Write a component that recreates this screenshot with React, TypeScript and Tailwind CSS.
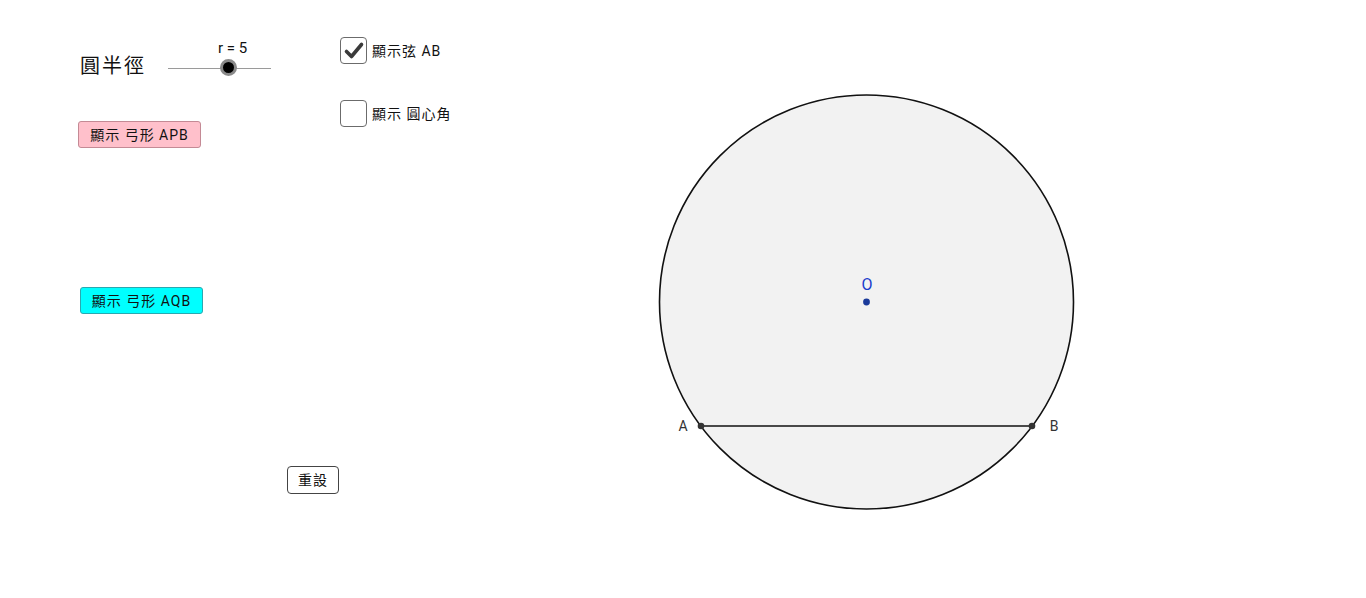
import React from "react"

const font = { fontFamily: 'Roboto, "Noto Sans CJK TC", sans-serif' }

function CheckBox({ checked, label }: { checked: boolean; label: string }) {
  return (
    <label className="flex items-center gap-[5px]">
      <span className="w-[27px] h-[27px] rounded-[4px] border-[1.5px] border-[#6b6b6b] bg-white flex items-center justify-center">
        {checked && (
          <svg width="22" height="22" viewBox="0 0 22 22">
            <path d="M3.5 11.5 L8.5 16.5 L18.5 4.5" fill="none" stroke="#3a3a3a" strokeWidth="3.6" strokeLinecap="round" strokeLinejoin="round" />
          </svg>
        )}
      </span>
      <span className="text-[14px] leading-[18px] tracking-[1px]">{label}</span>
    </label>
  )
}

function Slider() {
  return (
    <div className="flex flex-col items-center w-[103px] mt-[2px]">
      <span className="text-[15px] leading-[18px] pl-[26px]">r = 5</span>
      <div className="relative w-full h-[22px] flex items-center">
        <div className="w-full h-px bg-[#9a9a9a]" />
        {/* 滑桿把手 */}
        <div className="absolute left-[52px] top-[2px] w-[17px] h-[17px] rounded-full bg-black border-[3px] border-[#8a8a8a]" />
      </div>
    </div>
  )
}

function Geometry() {
  // 繪圖區：圓心 (866,302)，半徑 207
  return (
    <svg className="absolute left-0 top-0" width="1366" height="598" viewBox="0 0 1366 598">
      <circle cx="866.5" cy="302" r="207" fill="#f2f2f2" stroke="#111" strokeWidth="1.6" />
      <line x1="701" y1="426" x2="1032" y2="426" stroke="#111" strokeWidth="1.4" />
      <circle cx="701" cy="426" r="3.3" fill="#333" />
      <circle cx="1032" cy="426" r="3.3" fill="#333" />
      <circle cx="866.5" cy="302" r="3.4" fill="#1a3a9a" />
      <text x="683" y="431" fontSize="14" fill="#333" textAnchor="middle" fontFamily="Roboto, sans-serif">A</text>
      <text x="1054" y="431" fontSize="14" fill="#333" textAnchor="middle" fontFamily="Roboto, sans-serif">B</text>
      <text x="867" y="290" fontSize="16" fill="#1a3ccc" textAnchor="middle" fontFamily="Roboto, sans-serif">O</text>
    </svg>
  )
}

export default function App() {
  return (
    <div className="relative w-[1366px] h-[598px] overflow-hidden bg-white text-[#111]" style={font}>
      <Geometry />

      <div className="relative flex pl-[78px] pt-[37px]">
        {/* 左欄：半徑與按鈕 */}
        <div className="flex flex-col items-start w-[262px]">
          <div className="flex items-start h-[41px] pl-[2px] gap-[22px]">
            <span className="mt-[16px] text-[20px] leading-[26px] tracking-[2px]">圓半徑</span>
            <Slider />
          </div>
          <button className="mt-[43px] w-[123px] h-[27px] rounded-[3px] border border-[#c48a95] bg-[#ffc0cb] text-[14px] leading-none tracking-[1px]">
            顯示 弓形 APB
          </button>
          <button className="mt-[139px] ml-[2px] w-[123px] h-[27px] rounded-[3px] border border-[#2aa8b0] bg-[#00ffff] text-[14px] leading-none tracking-[1px]">
            顯示 弓形 AQB
          </button>
          <button className="mt-[152px] ml-[209px] w-[52px] h-[28px] rounded-[4px] border-[1.5px] border-[#444] bg-white text-[14px] leading-none tracking-[1px]">
            重設
          </button>
        </div>

        {/* 右欄：勾選方塊 */}
        <div className="flex flex-col gap-[36px]">
          <CheckBox checked label="顯示弦 AB" />
          <CheckBox checked={false} label="顯示 圓心角" />
        </div>
      </div>
    </div>
  )
}
